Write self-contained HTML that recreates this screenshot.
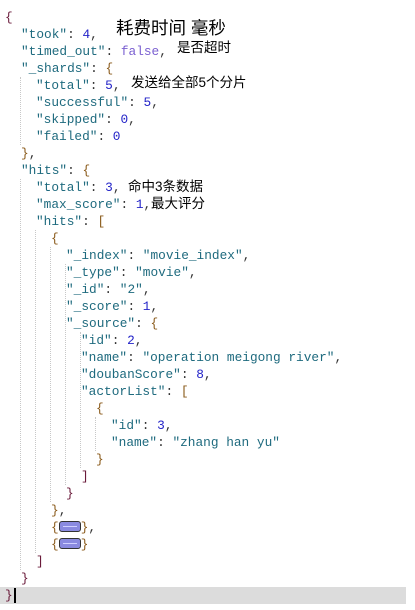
<!DOCTYPE html>
<html><head><meta charset="utf-8"><style>
html,body{margin:0;padding:0;width:415px;height:610px;background:#fff;overflow:hidden;position:relative}
.l{position:absolute;height:17px;line-height:17px;font-family:"Liberation Mono",monospace;font-size:12.8px;white-space:pre;color:#333}
.k{color:#1e6a7e}.s{color:#1e6a7e}.n{color:#2323c8}.b{color:#7a5fd0}
.br{color:#8a5a1a}.br0{color:#6a1a3a}
.g{position:absolute;width:0;border-left:1px dotted #c8c8c8}
.cn{position:absolute;font-family:"Liberation Sans","Noto Sans CJK SC",sans-serif;color:#000;white-space:nowrap}
.cl{display:inline-block;width:20px;height:9px;background:#8a8ae0;border:1px solid #333;border-radius:3px;vertical-align:-1px;position:relative}
.cl:after{content:"";position:absolute;left:3px;right:3px;top:4px;border-top:1px solid #d0d0ff}
.sel{position:absolute;left:0;top:587px;width:406px;height:17px;background:#dcdcdc}
.cur{position:absolute;left:14px;top:588px;width:2px;height:15px;background:#000}
</style></head><body>
<div class="sel"></div><div class="cur"></div>
<div class="g" style="left:20px;top:77px;height:68px"></div>
<div class="g" style="left:20px;top:179px;height:391px"></div>
<div class="g" style="left:35px;top:230px;height:323px"></div>
<div class="g" style="left:50px;top:247px;height:255px"></div>
<div class="g" style="left:65px;top:264px;height:221px"></div>
<div class="g" style="left:80px;top:332px;height:136px"></div>
<div class="g" style="left:95px;top:417px;height:34px"></div>

<div class="l br0" style="top:9px;left:5px">{</div>
<div class="l" style="top:26px;left:21px"><span class="k">"took"</span>: <span class="n">4</span>,</div>
<div class="l" style="top:43px;left:21px"><span class="k">"timed_out"</span>: <span class="b">false</span>,</div>
<div class="l" style="top:60px;left:21px"><span class="k">"_shards"</span>: <span class="br">{</span></div>
<div class="l" style="top:77px;left:36px"><span class="k">"total"</span>: <span class="n">5</span>,</div>
<div class="l" style="top:94px;left:36px"><span class="k">"successful"</span>: <span class="n">5</span>,</div>
<div class="l" style="top:111px;left:36px"><span class="k">"skipped"</span>: <span class="n">0</span>,</div>
<div class="l" style="top:128px;left:36px"><span class="k">"failed"</span>: <span class="n">0</span></div>
<div class="l" style="top:145px;left:21px"><span class="br">}</span>,</div>
<div class="l" style="top:162px;left:21px"><span class="k">"hits"</span>: <span class="br">{</span></div>
<div class="l" style="top:179px;left:36px"><span class="k">"total"</span>: <span class="n">3</span>,</div>
<div class="l" style="top:196px;left:36px"><span class="k">"max_score"</span>: <span class="n">1</span>,</div>
<div class="l" style="top:213px;left:36px"><span class="k">"hits"</span>: <span class="br">[</span></div>
<div class="l" style="top:230px;left:51px"><span class="br">{</span></div>
<div class="l" style="top:247px;left:66px"><span class="k">"_index"</span>: <span class="s">"movie_index"</span>,</div>
<div class="l" style="top:264px;left:66px"><span class="k">"_type"</span>: <span class="s">"movie"</span>,</div>
<div class="l" style="top:281px;left:66px"><span class="k">"_id"</span>: <span class="s">"2"</span>,</div>
<div class="l" style="top:298px;left:66px"><span class="k">"_score"</span>: <span class="n">1</span>,</div>
<div class="l" style="top:315px;left:66px"><span class="k">"_source"</span>: <span class="br">{</span></div>
<div class="l" style="top:332px;left:81px"><span class="k">"id"</span>: <span class="n">2</span>,</div>
<div class="l" style="top:349px;left:81px"><span class="k">"name"</span>: <span class="s">"operation meigong river"</span>,</div>
<div class="l" style="top:366px;left:81px"><span class="k">"doubanScore"</span>: <span class="n">8</span>,</div>
<div class="l" style="top:383px;left:81px"><span class="k">"actorList"</span>: <span class="br">[</span></div>
<div class="l" style="top:400px;left:96px"><span class="br">{</span></div>
<div class="l" style="top:417px;left:111px"><span class="k">"id"</span>: <span class="n">3</span>,</div>
<div class="l" style="top:434px;left:111px"><span class="k">"name"</span>: <span class="s">"zhang han yu"</span></div>
<div class="l" style="top:451px;left:96px"><span class="br">}</span></div>
<div class="l" style="top:468px;left:81px"><span class="br0">]</span></div>
<div class="l" style="top:485px;left:66px"><span class="br0">}</span></div>
<div class="l" style="top:502px;left:51px"><span class="br">}</span>,</div>
<div class="l" style="top:519px;left:51px"><span class="br">{</span><span class="cl"></span><span class="br">}</span>,</div>
<div class="l" style="top:536px;left:51px"><span class="br">{</span><span class="cl"></span><span class="br">}</span></div>
<div class="l" style="top:553px;left:36px"><span class="br0">]</span></div>
<div class="l" style="top:570px;left:21px"><span class="br0">}</span></div>
<div class="l" style="top:587px;left:5px"><span class="br0">}</span></div>

<div class="cn" style="left:116px;top:18px;font-size:17.5px;line-height:20px">耗费时间 毫秒</div>
<div class="cn" style="left:177px;top:39px;font-size:13.5px;line-height:17px">是否超时</div>
<div class="cn" style="left:131px;top:74px;font-size:13.5px;line-height:17px">发送给全部5个分片</div>
<div class="cn" style="left:128px;top:178px;font-size:13.5px;line-height:17px">命中3条数据</div>
<div class="cn" style="left:151px;top:195px;font-size:13.5px;line-height:17px">最大评分</div>
</body></html>
